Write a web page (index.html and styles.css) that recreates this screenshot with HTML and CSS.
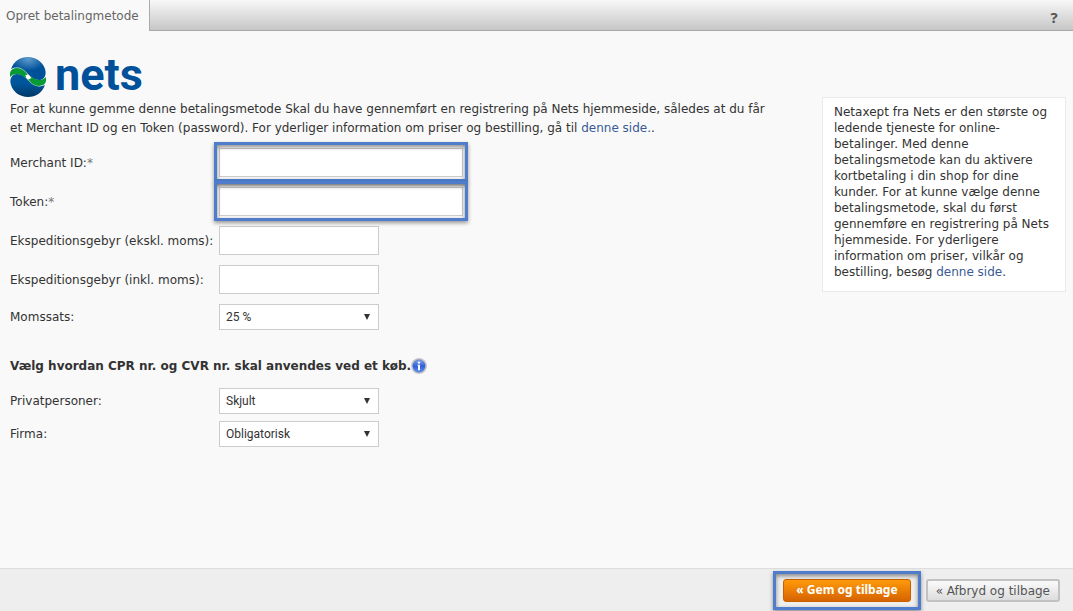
FILE: index.html
```
<!DOCTYPE html>
<html lang="da">
<head>
  <meta charset="UTF-8" />
  <meta name="viewport" content="width=device-width, initial-scale=1.0"/>
  <title>Opret betalingmetode</title>
  <link rel="stylesheet" href="styles.css">
</head>
<body>
  <header class="tabs">
    <a class="tab" href="#">Opret betalingmetode</a>
    <button class="help" type="button">?</button>
  </header>

  <form class="page" id="payment">
    <main class="content">
      <div class="logo">
        <svg class="globe" viewBox="0 0 36 40" aria-hidden="true">
          <defs>
            <radialGradient id="top" cx="50%" cy="10%" r="50%">
              <stop offset="0" stop-color="#5c9aca"/>
              <stop offset="1" stop-color="#00519a"/>
            </radialGradient>
            <linearGradient id="bottom" x1="0" y1="0" x2="0" y2="1">
              <stop offset="0.4" stop-color="#00569c"/>
              <stop offset="1" stop-color="#003866"/>
            </linearGradient>
          </defs>
          <path fill="url(#top)" d="M1 12C4 4 10 0 18 0s15 5 17 12c2 6-1 11-6 11-6 0-8-3-12-7C13 11 7 9 1 12z"/>
          <path fill="url(#bottom)" d="M35 28c-3 8-9 12-17 12S3 35 1 28c-2-6 1-11 6-11 6 0 8 3 12 7 4 5 10 7 16 4z"/>
          <path fill="#079a35" d="M0 20C-1 14 2 11 7 11c5 0 8 3 11 7l-3 3C10 16 4 16 0 20z"/>
          <path fill="#079a35" d="M36 20c1 6-2 9-7 9-5 0-8-3-11-7l3-3c5 5 11 5 15 1z"/>
          <path fill="#fff" d="M15 18.5l3-1 3.500 3.500-3 1.500z"/>
        </svg>
        <span class="logo-text">nets</span>
      </div>

      <p class="intro">For at kunne gemme denne betalingsmetode Skal du have gennemført en registrering på Nets hjemmeside, således at du får et Merchant ID og en Token (password). For yderliger information om priser og bestilling, gå til <a href="#">denne side.</a>.</p>

      <div class="fields">
        <label for="merchant">Merchant ID:<span class="required">*</span></label>
        <div class="highlight"><input class="wide" id="merchant" type="text"></div>
        <label for="token">Token:<span class="required">*</span></label>
        <div class="highlight"><input class="wide" id="token" type="text"></div>
        <label for="fee-ex">Ekspeditionsgebyr (ekskl. moms):</label>
        <input id="fee-ex" type="text">
        <label for="fee-inc">Ekspeditionsgebyr (inkl. moms):</label>
        <input id="fee-inc" type="text">
        <label for="vat">Momssats:</label>
        <div class="select">
          <select id="vat"><option>25 %</option></select>
        </div>
      </div>

      <h2>Vælg hvordan CPR nr. og CVR nr. skal anvendes ved et køb.
        <svg class="info" viewBox="0 0 16 16" aria-hidden="true">
          <defs>
            <linearGradient id="blue" x1="0" y1="0" x2="0" y2="1">
              <stop offset="0" stop-color="#8aa6ee"/>
              <stop offset="0.5" stop-color="#2f5ed8"/>
              <stop offset="1" stop-color="#5a92f2"/>
            </linearGradient>
          </defs>
          <circle cx="8" cy="8" r="8" fill="#c9c9cc"/>
          <circle cx="8" cy="8" r="6.200" fill="url(#blue)" stroke="#4364b8" stroke-width="0.5"/>
          <circle cx="8" cy="4.6" r="1.2" fill="#fff"/>
          <path d="M6.500 6.700h2.500v5.600H7V7.700h-.5z" fill="#fff"/>
        </svg>
      </h2>

      <div class="fields compact">
        <label for="private">Privatpersoner:</label>
        <div class="select">
          <select id="private"><option>Skjult</option></select>
        </div>
        <label for="company">Firma:</label>
        <div class="select">
          <select id="company"><option>Obligatorisk</option></select>
        </div>
      </div>
    </main>

    <aside class="infobox">Netaxept fra Nets er den største og ledende tjeneste for online-betalinger. Med denne betalingsmetode kan du aktivere kortbetaling i din shop for dine kunder. For at kunne vælge denne betalingsmetode, skal du først gennemføre en registrering på Nets hjemmeside. For yderligere information om priser, vilkår og bestilling, besøg <a href="#">denne side</a>.</aside>
  </form>

  <footer class="actions">
    <div class="highlight save-mark"><button class="btn save" type="submit" form="payment">« Gem og tilbage</button></div>
    <button class="btn cancel" type="button">« Afbryd og tilbage</button>
  </footer>
</body>
</html>
```
FILE: styles.css
```
* {
  box-sizing: border-box;
}

body {
  margin: 0;
  min-height: 100vh;
  display: flex;
  flex-direction: column;
  background: #f9f9f9;
  color: #333;
  font-family: "DejaVu Sans", sans-serif;
  font-size: 12px;
  line-height: 16px;
}

a {
  color: #3a5a96;
  text-decoration: none;
}

.tabs {
  display: flex;
  justify-content: space-between;
  height: 31px;
  background: linear-gradient(#f8f8f8, #c6c6c6);
  border-bottom: 1px solid #aaa;
}

.tab {
  height: 31px;
  padding: 8px 10px 0 6px;
  background: #f9f9f9;
  border-right: 1px solid #aaa;
  color: #666;
}

.help {
  width: 38px;
  padding: 3px 0 0;
  border: none;
  background: none;
  color: #555;
  font: bold 15px "Noto Sans", sans-serif;
  cursor: pointer;
}

.page {
  flex: 1;
  display: flex;
  justify-content: space-between;
  align-items: flex-start;
  padding: 26px 7px 20px 10px;
}

.content {
  flex: 0 1 770px;
}

.logo {
  display: flex;
  align-items: flex-start;
  gap: 9px;
  height: 43px;
}

.globe {
  width: 36px;
  height: 40px;
}

.logo-text {
  color: #00519a;
  font: bold 45px/36px Roboto, sans-serif;
}

.intro {
  margin: 0 0 10px;
  line-height: 19px;
}

.fields {
  display: grid;
  grid-template-columns: 209px 1fr;
  row-gap: 10px;
  align-items: center;
  justify-items: start;
}

.fields label {
  white-space: nowrap;
}

.compact {
  row-gap: 7px;
}

.required {
  color: #777;
}

input,
select {
  display: block;
  width: 160px;
  height: 29px;
  padding: 0 6px;
  border: 1px solid #ccc;
  border-radius: 0;
  background: #fff;
  color: #333;
  font: 12px Roboto, sans-serif;
}

.wide {
  width: 244px;
}

select {
  height: 26px;
  appearance: none;
}

.select {
  display: grid;
  align-items: center;
}

.select select,
.select::after {
  grid-area: 1 / 1;
}

.select::after {
  content: "";
  justify-self: end;
  margin-right: 9px;
  border: 3px solid transparent;
  border-top: 6px solid #333;
  border-bottom: none;
  pointer-events: none;
}

/* blue frame around the things the user has to fill in or press */
.highlight {
  position: relative;
  padding: 3px 2px 2px;
  border: 3px solid #4f7ccb;
  box-shadow: 0 2px 4px rgba(0, 0, 0, 0.4);
}

.highlight::after {
  content: "";
  position: absolute;
  inset: 0;
  box-shadow: inset 0 2px 4px rgba(0, 0, 0, 0.45);
  pointer-events: none;
}

.fields .highlight {
  margin: -6px -5px -5px;
}

h2 {
  display: flex;
  align-items: center;
  margin: 28px 0 14px;
  font-size: 12px;
  line-height: 16px;
}

.info {
  width: 16px;
  height: 16px;
}

.infobox {
  flex: 0 0 244px;
  margin-top: 40px;
  padding: 6px 11px 11px;
  border: 1px solid #eaeaea;
  background: #fff;
}

.actions {
  display: flex;
  justify-content: flex-end;
  align-items: center;
  gap: 5px;
  padding: 2px 13px 1px;
  background: #eee;
  border-top: 1px solid #ddd;
}

.save-mark {
  padding: 5px 7px;
}

.btn {
  height: 23px;
  border-radius: 3px;
  font-size: 12px;
  line-height: 16px;
  cursor: pointer;
}

.save {
  padding: 0 12px 1px;
  border: 1px solid #c86000;
  background: linear-gradient(#ff9a0a, #d66300);
  color: #fff;
  font-family: "Noto Sans", sans-serif;
  font-weight: bold;
}

.cancel {
  padding: 0 8px;
  border: 2px solid #c2c2c2;
  background: linear-gradient(#fafafa, #ddd);
  color: #555;
  font-family: "DejaVu Sans", sans-serif;
}
```
